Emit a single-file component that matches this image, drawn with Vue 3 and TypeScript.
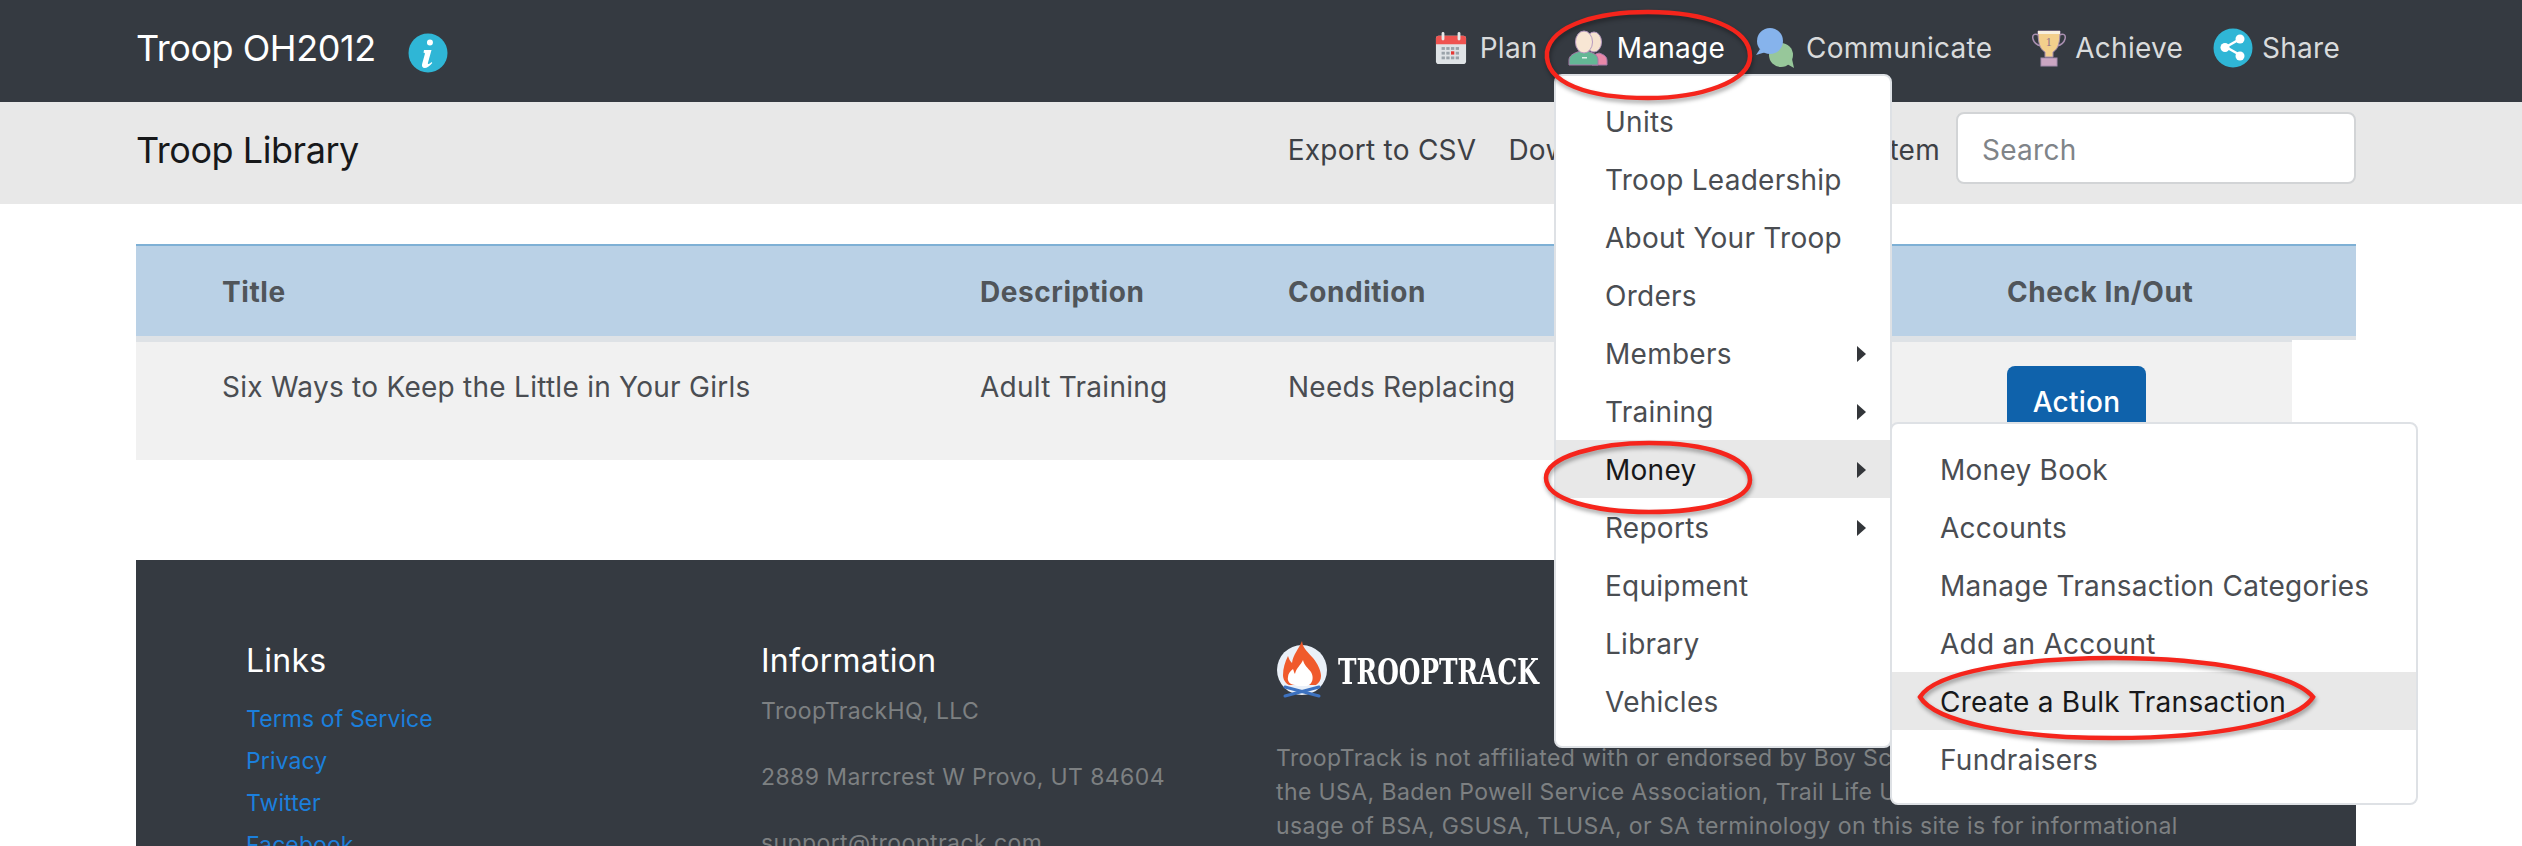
<script setup lang="ts">
const navItems: string[] = ['Plan', 'Manage', 'Communicate', 'Achieve', 'Share']
const mainMenu = [
  { label: 'Units' },
  { label: 'Troop Leadership' },
  { label: 'About Your Troop' },
  { label: 'Orders' },
  { label: 'Members', sub: true },
  { label: 'Training', sub: true },
  { label: 'Money', sub: true, active: true },
  { label: 'Reports', sub: true },
  { label: 'Equipment' },
  { label: 'Library' },
  { label: 'Vehicles' },
]
const subMenu = [
  { label: 'Money Book' },
  { label: 'Accounts' },
  { label: 'Manage Transaction Categories' },
  { label: 'Add an Account' },
  { label: 'Create a Bulk Transaction', active: true },
  { label: 'Fundraisers' },
]
const links: string[] = ['Terms of Service', 'Privacy', 'Twitter', 'Facebook']
</script>

<template>
  <div class="page">
    <header class="topbar">
      <div class="brand">
        <span class="brand-name">Troop OH2012</span>
        <svg class="info" viewBox="0 0 40 40" width="40" height="40">
          <circle cx="20" cy="20" r="19.5" fill="#2fb6d6" />
          <path d="M22 6.5a3 3 0 1 1-.1 6 3 3 0 0 1 .1-6zM16 17h7.5l-3.6 13c-.4 1.4.9 1.6 3.6-1l.8.9c-3 3.6-5.4 5-7.5 5-2.400 0-3.300-1.700-2.700-4l2.700-9.700c.3-1.200-.3-1.500-1.300-1.500z" fill="#fff" />
        </svg>
      </div>
      <nav class="nav">
        <a v-for="item in navItems" :key="item" class="nav-item" :class="['nav-' + item.toLowerCase(), { current: item === 'Manage' }]">
          <svg v-if="item === 'Plan'" class="nav-icon" viewBox="0 0 34 36" width="32" height="34">
            <rect x="1" y="5" width="32" height="30" rx="3" fill="#dfe3e6" />
            <path d="M1 14V8a3 3 0 0 1 3-3h26a3 3 0 0 1 3 3v6z" fill="#ef5350" />
            <rect x="7" y="1" width="3" height="9" rx="1.500" fill="#e8e8e8" />
            <rect x="24" y="1" width="3" height="9" rx="1.500" fill="#e8e8e8" />
            <g fill="#9aa3aa">
              <rect x="7" y="17" width="3.500" height="3" /><rect x="12" y="17" width="3.500" height="3" /><rect x="17" y="17" width="3.500" height="3" /><rect x="22" y="17" width="3.500" height="3" />
              <rect x="7" y="22" width="3.500" height="3" /><rect x="12" y="22" width="3.500" height="3" /><rect x="22" y="22" width="3.500" height="3" />
              <rect x="7" y="27" width="3.500" height="3" /><rect x="12" y="27" width="3.500" height="3" /><rect x="17" y="27" width="3.500" height="3" /><rect x="22" y="27" width="3.500" height="3" />
            </g>
            <rect x="17" y="21.500" width="3.500" height="3.500" fill="#e53935" />
          </svg>
          <svg v-else-if="item === 'Manage'" class="nav-icon" viewBox="0 0 40 36" width="40" height="36">
            <path d="M24 35v-8l4-3 3-1c6 2 8 4 8 8v4z" fill="#e888a8" stroke="#a678a8" stroke-width="1" />
            <ellipse cx="26" cy="12" rx="7.500" ry="10" fill="#f6e2cf" stroke="#b79ac0" stroke-width="1" />
            <path d="M1 35v-5c0-4 4-7 12-9h6c8 2 11 5 11 9v5z" fill="#63b795" stroke="#a678a8" stroke-width="1" />
            <ellipse cx="16" cy="12" rx="8.500" ry="11" fill="#f8e6d4" stroke="#b79ac0" stroke-width="1" />
            <rect x="14" y="27" width="5" height="1.500" fill="#dff2e8" />
          </svg>
          <svg v-else-if="item === 'Communicate'" class="nav-icon" viewBox="0 0 42 40" width="42" height="40">
            <circle cx="26" cy="27" r="12" fill="#97c79a" />
            <path d="M32 36l7 4-2-9z" fill="#97c79a" />
            <circle cx="15" cy="13" r="13" fill="#86b3ec" />
            <path d="M5 21l-4 6 10-3z" fill="#86b3ec" />
          </svg>
          <svg v-else-if="item === 'Achieve'" class="nav-icon" viewBox="0 0 34 38" width="34" height="38">
            <path d="M7 6C2 4 0 6 1 10c1 4 4 6 8 7M27 6c5-2 7 0 6 4-1 4-4 6-8 7" fill="none" stroke="#a98fb0" stroke-width="1.500" />
            <path d="M6 2h22c0 9-1 18-7 21v5h-8v-5C7 20 6 11 6 2z" fill="#f3cf8c" stroke="#a58cae" stroke-width="1" />
            <rect x="6" y="2" width="22" height="3" fill="#f7efe0" />
            <text x="17" y="17" font-size="12" font-family="Liberation Serif, serif" text-anchor="middle" fill="#8a6d8a">1</text>
            <rect x="9" y="29" width="16" height="8" fill="#cba6c2" stroke="#a58cae" stroke-width="1" />
          </svg>
          <svg v-else class="nav-icon" viewBox="0 0 40 40" width="40" height="40">
            <circle cx="20" cy="20" r="19.500" fill="#2fb6d6" />
            <path d="M27 11l-14 8 14 8" fill="none" stroke="#fff" stroke-width="2.500" />
            <circle cx="27" cy="11" r="4.500" fill="#fff" /><circle cx="12" cy="19.500" r="4.500" fill="#fff" /><circle cx="27" cy="28" r="4.500" fill="#fff" />
          </svg>
          <span>{{ item }}</span>
        </a>
      </nav>
    </header>

    <section class="subbar">
      <h1 class="subbar-title">Troop Library</h1>
      <div class="subbar-actions">
        <a>Export to CSV</a>
        <a>Download Library</a>
        <a>Add an Item</a>
        <input class="search" type="text" placeholder="Search" />
      </div>
    </section>

    <main class="content">
      <div class="table-head table-grid">
        <span>Title</span>
        <span>Description</span>
        <span>Condition</span>
        <span></span>
        <span>Check In/Out</span>
      </div>
      <div class="table-rule"></div>
      <div class="table-row table-grid">
        <span>Six Ways to Keep the Little in Your Girls</span>
        <span>Adult Training</span>
        <span>Needs Replacing</span>
        <span></span>
        <span><button class="action">Action</button></span>
      </div>
    </main>

    <footer class="footer">
      <div class="foot-col">
        <h3>Links</h3>
        <a v-for="l in links" :key="l" class="foot-link">{{ l }}</a>
      </div>
      <div class="foot-col">
        <h3>Information</h3>
        <p class="foot-info">TroopTrackHQ, LLC</p>
        <p class="foot-info">2889 Marrcrest W Provo, UT 84604</p>
        <p class="foot-info">support@trooptrack.com</p>
      </div>
      <div class="foot-col about">
        <div class="logo">
          <svg viewBox="0 0 52 61" width="52" height="61">
            <circle cx="26" cy="30" r="25" fill="#eaf0f8" />
            <path d="M26 1c1 8 6 11 11 17 5 6 8 13 8 18 0 4-2 7-5 9H13c-4-2-6-6-6-10 0-7 2-13 5-19 1 3 2 5 4 7 1-9 7-14 10-22z" fill="#f05a2c" />
            <path d="M27 20c1 5 5 8 8 12 3 5 2 12-4 14H22c-2 0-3-1-3-1-5 0-8-4-7-8 0-3 2-6 5-8 1 2 1 4 2 5 1-6 6-9 8-14z" fill="#fff" />
            <path d="M9 47l34 9M43 47L9 56" stroke="#3d72c0" stroke-width="3" stroke-linecap="round" />
          </svg>
          <span class="logo-text">TROOPTRACK</span>
        </div>
        <p class="about-text">TroopTrack is not affiliated with or endorsed by Boy Scouts of America, Girl Scouts of<br />the USA, Baden Powell Service Association, Trail Life USA, or any other organization. Any<br />usage of BSA, GSUSA, TLUSA, or SA terminology on this site is for informational</p>
      </div>
    </footer>

    <div class="menu main-menu">
      <a v-for="m in mainMenu" :key="m.label" class="menu-item" :class="{ active: m.active }">
        <span>{{ m.label }}</span>
        <i v-if="m.sub" class="caret"></i>
      </a>
    </div>
    <div class="menu sub-menu">
      <a v-for="m in subMenu" :key="m.label" class="menu-item" :class="{ active: m.active }">
        <span>{{ m.label }}</span>
      </a>
    </div>

    <svg class="rings" viewBox="0 0 2522 846" width="2522" height="846">
      <path d="M1547 52C1552 24 1600 12 1648 12C1705 12 1750 28 1750 56C1750 82 1700 98 1648 98C1590 98 1544 84 1547 52Z" />
      <path d="M1546 478C1546 456 1600 443 1649 443C1705 443 1750 456 1750 480C1750 500 1705 512 1649 512C1595 512 1546 500 1546 478Z" />
      <path d="M1920 697C1935 672 2020 658 2113 658C2215 658 2295 675 2313 697C2298 722 2215 738 2113 738C2015 738 1935 722 1920 697Z" />
    </svg>
  </div>
</template>

<style scoped>
.page {
  position: relative;
  width: 2522px;
  height: 846px;
  overflow: hidden;
  background: #fff;
  font-family: Inter, "Liberation Sans", sans-serif;
  font-size: 28px;
  line-height: 1.5;
  letter-spacing: 0.26px;
  color: #4a4d52;
}
.topbar {
  height: 102px;
  box-sizing: border-box;
  padding: 0 182px 6px 136px;
  background: #353a41;
  display: flex;
  align-items: center;
  justify-content: space-between;
}
.brand {
  display: flex;
  align-items: center;
  gap: 32px;
  color: #fff;
  font-size: 36px;
  letter-spacing: -0.45px;
}
.info {
  margin-top: 10px;
}
.nav {
  display: flex;
  align-items: center;
  gap: 30px;
  color: #d9dbdc;
}
.nav-item {
  display: flex;
  align-items: center;
  gap: 9px;
}
.nav-item.current {
  color: #fff;
}
.nav-plan {
  gap: 13px;
}
.nav-achieve {
  margin-left: 10px;
}
.subbar {
  height: 102px;
  box-sizing: border-box;
  padding: 0 166px 6px 136px;
  background: #e8e8e8;
  display: flex;
  align-items: center;
  justify-content: space-between;
}
.subbar-title {
  margin: 0;
  font-size: 36px;
  font-weight: 400;
  letter-spacing: -0.45px;
  color: #17181a;
}
.subbar-actions {
  display: flex;
  align-items: center;
  gap: 32px;
  color: #3d4045;
}
.search {
  width: 400px;
  height: 72px;
  box-sizing: border-box;
  margin: 0 0 4px -16px;
  padding: 4px 24px 0;
  border: 2px solid #d2d4d6;
  border-radius: 8px;
  background: #fff;
  font: inherit;
  letter-spacing: inherit;
  outline: none;
}
.search::placeholder {
  color: #808488;
}
.content {
  padding: 40px 166px 0 136px;
  height: 356px;
  box-sizing: border-box;
}
.table-grid {
  display: grid;
  grid-template-columns: 758px 308px 420px 299px 1fr;
  padding-left: 86px;
}
.table-head {
  height: 92px;
  box-sizing: border-box;
  align-items: center;
  padding-top: 2px;
  border-top: 2px solid #7eb0d5;
  background: #bad1e6;
  font-weight: 700;
  letter-spacing: 0.55px;
  color: #50555a;
}
.table-rule {
  height: 4px;
  background: #dee2e6;
}
.table-row {
  width: 2156px;
  height: 120px;
  box-sizing: border-box;
  padding-top: 24px;
  border-top: 2px solid #dee2e6;
  background: #f1f1f1;
  align-items: start;
}
.action {
  width: 139px;
  height: 72px;
  border: 0;
  border-radius: 8px;
  background: #0f62ab;
  color: #fff;
  font: inherit;
  font-weight: 500;
  letter-spacing: inherit;
}
.footer {
  margin: 0 166px 0 136px;
  height: 286px;
  box-sizing: border-box;
  padding: 77px 0 0 110px;
  background: #353a41;
  display: grid;
  grid-template-columns: 515px 515px 1fr;
  overflow: hidden;
}
.foot-col h3 {
  margin: 0 0 13px;
  font-size: 32px;
  line-height: 48px;
  font-weight: 400;
  color: #fff;
}
.foot-link {
  display: block;
  font-size: 23px;
  letter-spacing: 0.1px;
  line-height: 42px;
  color: #1b7fdc;
}
.foot-info {
  margin: -5px 0 35px;
  font-size: 23px;
  letter-spacing: 0.4px;
  line-height: 36px;
  color: #7d8082;
}
.about {
  margin-top: 3px;
  width: 970px;
}
.logo {
  display: flex;
  align-items: center;
  gap: 10px;
  height: 61px;
}
.logo-text {
  display: inline-block;
  font-family: "DejaVu Serif", serif;
  font-weight: 700;
  font-size: 36px;
  letter-spacing: 0;
  color: #fff;
  white-space: nowrap;
  transform: scaleX(0.69);
  transform-origin: left center;
}
.about-text {
  margin: 40px 0 0;
  font-size: 23px;
  letter-spacing: 0.4px;
  line-height: 34px;
  white-space: nowrap;
  color: #7d8082;
}
.menu {
  position: absolute;
  box-sizing: border-box;
  background: #fff;
  border: 2px solid #dee1e5;
  border-radius: 8px;
  color: #4a4d52;
}
.main-menu {
  left: 1554px;
  top: 74px;
  width: 338px;
  padding: 16px 0;
  height: 674px;
}
.sub-menu {
  left: 1890px;
  top: 422px;
  width: 528px;
  height: 383px;
  padding: 16px 0;
}
.menu-item {
  display: flex;
  align-items: center;
  justify-content: space-between;
  height: 58px;
  box-sizing: border-box;
  padding: 2px 24px 0 49px;
}
.sub-menu .menu-item {
  padding-left: 48px;
  white-space: nowrap;
}
.menu-item.active {
  background: #e8e8e8;
  color: #17181a;
}
.caret {
  width: 0;
  height: 0;
  border-left: 9px solid #33363a;
  border-top: 8px solid transparent;
  border-bottom: 8px solid transparent;
}
.rings {
  position: absolute;
  left: 0;
  top: 0;
  pointer-events: none;
  fill: none;
  stroke: #f5251c;
  stroke-width: 4.5px;
  filter: drop-shadow(1px 3px 2px rgba(0, 0, 0, 0.35));
}
</style>
